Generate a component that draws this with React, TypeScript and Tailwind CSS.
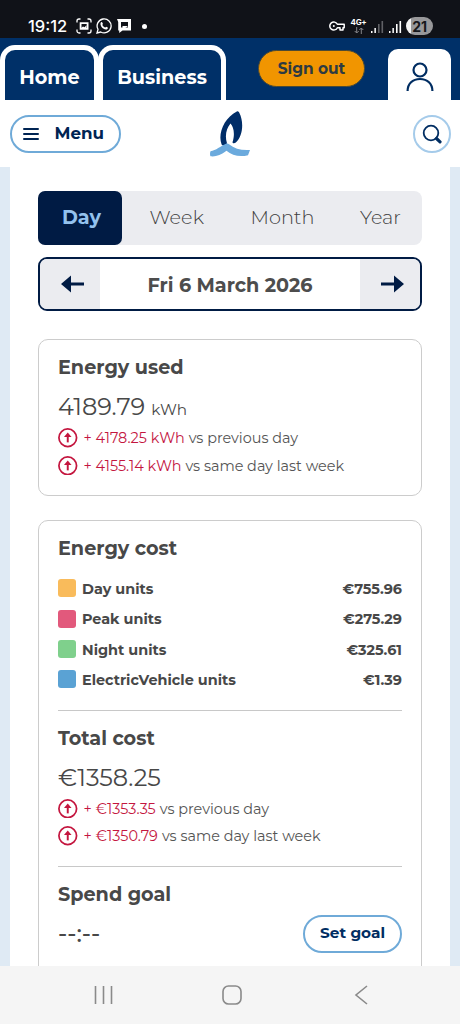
type Unit = { name: string; cost: string; swatch: string };

const units: Unit[] = [
  { name: "Day units", cost: "€755.96", swatch: "bg-[#f9bb5b]" },
  { name: "Peak units", cost: "€275.29", swatch: "bg-[#e2597c]" },
  { name: "Night units", cost: "€325.61", swatch: "bg-[#7fd08c]" },
  { name: "ElectricVehicle units", cost: "€1.39", swatch: "bg-[#5aa2d4]" },
];

const StatusBar = () => (
  <div className="flex h-[38px] items-end justify-between bg-[#101218] pr-[27px] pb-0 pl-7 font-['Inter',sans-serif] text-white">
    <div className="flex h-6 items-center">
      <span className="w-[48px] text-[16.500px] font-medium whitespace-nowrap">19:12</span>
      <svg className="block" width="16" height="16" viewBox="0 0 16 16" fill="none" stroke="white" strokeWidth="1.3">
        <path d="M1 4.5V3a2 2 0 0 1 2-2h1.5M11.5 1H13a2 2 0 0 1 2 2v1.5M15 11.5V13a2 2 0 0 1-2 2h-1.5M4.500 15H3a2 2 0 0 1-2-2v-1.500" />
        <path d="M4.600 5.200h7v5.600h-7z" strokeWidth="1.800" />
        <path d="M5 10l2-1.600 1.500.8 2-2V11H5z" fill="white" stroke="none" />
      </svg>
      <svg className="ml-1 block" width="16" height="16" viewBox="0 0 16 16" fill="none" stroke="white" strokeWidth="1.3">
        <path d="M1 15l1-3.700A7 7 0 1 1 4.700 14z" />
        <path
          d="M5 4.200c.5-.5 1-.4 1.300.2l.6 1.300c.1.500-.6.900-.6 1.300.6 1.200 1.500 2 2.700 2.600.5 0 .8-.9 1.200-.9l1.500.8c.4.300.2 1-.3 1.500-1 .9-2.500.6-4.200-.5C5.200 9.100 3.600 6 5 4.200z"
          fill="white"
          stroke="none"
        />
      </svg>
      <svg className="ml-[5px] block" width="14" height="14" viewBox="0 0 14 14">
        <path d="M0 0h14v11.500H5.500L2.200 14v-2.500H1.200V3z" fill="white" />
        <path d="M4 3h7v5.500H8.500L6 8.500H4z" fill="#101218" />
        <path d="M5.500 11V7H11z" fill="white" />
      </svg>
      <span className="ml-[11px] size-[5px] rounded-full bg-white" />
    </div>
    <div className="flex h-6 items-center">
      <svg className="block" width="16" height="10" viewBox="0 0 16 10" fill="none" stroke="white" strokeWidth="1.500">
        <path d="M8.400 3.300A4 4 0 1 0 8.400 6.700H11v2.200h3V6.700h1.200V3.300z" strokeLinejoin="round" />
        <circle cx="4.800" cy="5" r="1" fill="white" stroke="none" />
      </svg>
      <div className="ml-[6px] flex w-[15px] flex-col items-center">
        <span className="text-[8px] leading-[7px] font-bold tracking-[-0.3px]">4G+</span>
        <svg className="mt-px block" width="10" height="7" viewBox="0 0 10 7" fill="none" stroke="#85868a">
          <path d="M2.700 0v6M.7 4l2 2 2-2M7.300 7V1M5.300 3l2-2 2 2" />
        </svg>
      </div>
      <svg className="ml-[5px] block" width="13" height="13" viewBox="0 0 13 13">
        <path d="M0 11h1.500v2H0zM3.400 8h1.500v5h-1.500z" fill="white" />
        <path d="M7 4h1.600v9H7zM10.500 1h1.600v12h-1.600z" fill="#606166" />
      </svg>
      <svg className="ml-[5px] block" width="13" height="13" viewBox="0 0 13 13" fill="white">
        <path d="M0 11h1.500v2H0zM3.400 8h1.500v5h-1.500zM7 4h1.600v9H7zM10.500 1h1.600v12h-1.600z" />
      </svg>
      <span className="ml-[4px] flex h-[18px] w-[27px] items-center justify-center rounded-full bg-linear-to-r from-[#f4f4f4] from-20% to-[#98989a] to-20% text-[14px] font-bold tracking-[-0.3px] text-[#17181c]">
        21
      </span>
    </div>
  </div>
);

const TopTabs = () => (
  <div className="flex h-[62px] items-end bg-[#003068]">
    <button className="flex h-[55px] w-[99px] items-center justify-center rounded-t-[15px] border-x-[5px] border-t-[5px] border-white pt-[5px] text-[19.200px] font-bold text-white">
      Home
    </button>
    <button className="-ml-px flex h-[55px] w-[128px] items-center justify-center rounded-t-[15px] border-x-[5px] border-t-[5px] border-white pt-[5px] text-[19.200px] font-bold text-white">
      Business
    </button>
    <button className="mb-[13px] ml-8 h-[37px] w-[107px] rounded-full border border-[#4b4a35] bg-[#f19500] text-[15.400px] font-bold text-[#2d3a42]">
      Sign out
    </button>
    <button className="ml-[23px] flex h-[51px] w-[63px] items-center justify-center rounded-t-[10px] bg-white pt-1">
      <svg className="block" width="28" height="30" viewBox="0 0 28 30" fill="none" stroke="#002d62" strokeWidth="2.200">
        <circle cx="14" cy="8" r="6.500" />
        <path d="M1.600 29c0-7.300 5-12 12.400-12s12.400 4.700 12.400 12" />
      </svg>
    </button>
  </div>
);

const MainBar = () => (
  <div className="flex h-[67px] items-center bg-white pr-[9.500px] pl-[9.500px]">
    <button className="flex h-[38px] w-[111px] items-center rounded-full border-2 border-[#6faad8] pl-[11px] text-[#002453]">
      <svg className="block" width="16" height="12" viewBox="0 0 16 12" stroke="currentColor" strokeWidth="2" strokeLinecap="round">
        <path d="M1 1h14M1 6h14M1 11h14" />
      </svg>
      <span className="ml-4 text-[16.700px] font-bold">Menu</span>
    </button>
    <svg className="ml-[89.500px] block" width="40" height="46" viewBox="0 0 40 46">
      <path
        d="M11.600 33.500C7.500 23 14 7 26.800.5c1.200-.6 2 .2 2.600 1.600C34 11 33 25 25.800 31.500c-1.200 1-3 1.200-3.300-.2C25 24 24 16 20.500 12.500 16.500 17 14.500 25 17 32.300c-1 2.300-4.500 2.900-5.400 1.200z"
        fill="#002d68"
      />
      <path
        d="M.5 40.200C6 39.500 10.500 35 16 32.700c1.300-.5 2-.3 3 .5 5.500 4.600 12.300 6.400 21 5.800l-2 5.200C29 46.500 22 44 16.500 39.700 11 44 5.500 46 .5 45.300-.3 44 0 41.500.5 40.200z"
        fill="#6baadd"
      />
    </svg>
    <button className="ml-auto flex size-[38px] items-center justify-center rounded-full border-2 border-[#a5cbea]">
      <svg className="block" width="20" height="20" viewBox="0 0 20 20" fill="none" stroke="#002d62">
        <circle cx="9" cy="9" r="7.300" strokeWidth="1.800" />
        <path d="M14.500 14.500l3.500 3.300" strokeWidth="3.200" strokeLinecap="round" />
      </svg>
    </button>
  </div>
);

const PeriodTabs = () => (
  <div className="flex h-[54px] items-center rounded-[8px] bg-[#ebecf0] pb-px text-[19.300px] font-light text-[#3f3f3f]">
    <div className="-mb-px flex h-[54px] w-[84px] items-center justify-center rounded-[7px] bg-[#001b44] pb-px pl-[3px] text-[19.200px] font-bold text-[#93c2ee]">
      Day
    </div>
    <span className="ml-[27.500px] w-[101px]">Week</span>
    <span className="w-[109.500px]">Month</span>
    <span>Year</span>
  </div>
);

const Arrow = ({ className = "" }: { className?: string }) => (
  <svg className={className} width="23" height="18" viewBox="0 0 23 18" fill="#001b44">
    <path d="M0 9l10-8.500V7.500h13v3H10v7z" />
  </svg>
);

const DatePicker = () => (
  <div className="mt-3 flex h-[54px] overflow-hidden rounded-[9px] border-2 border-[#001b44]">
    <div className="flex w-[60px] items-center justify-center bg-[#ebecf0] pl-1">
      <Arrow className="block" />
    </div>
    <div className="flex flex-1 items-center justify-center pt-0.5 text-[19.200px] font-bold text-[#4d4d4d]">
      Fri 6 March 2026
    </div>
    <div className="flex w-[60px] items-center justify-center bg-[#ebecf0] pl-1">
      <Arrow className="block rotate-180" />
    </div>
  </div>
);

const Heading = ({ children }: { children: string }) => (
  <h2 className="pb-0.5 text-[19.200px] leading-[22px] font-bold text-[#484848]">{children}</h2>
);

const Change = ({ amount, since }: { amount: string; since: string }) => (
  <div className="flex h-[27.500px] items-center text-[14.400px] whitespace-nowrap text-[#555555]">
    <svg className="mr-[6px] block" width="19.500" height="19.500" viewBox="0 0 19 19" fill="none" stroke="#c4163f">
      <circle cx="9.500" cy="9.500" r="8.600" strokeWidth="1.700" />
      <path d="M9.500 14V8" strokeWidth="1.900" />
      <path d="M9.500 4.500l3.700 4.300H5.800z" fill="#c4163f" stroke="none" />
    </svg>
    <span className="mr-1 pt-[3px] text-[#c4163f]">{amount}</span>
    <span className="pt-[3px]">{since}</span>
  </div>
);

const App = () => {
  return (
    <div className="flex h-[1024px] w-[460px] flex-col overflow-hidden bg-[#dfeaf4] font-['Montserrat','Inter',sans-serif]">
      <StatusBar />
      <TopTabs />
      <MainBar />

      <main className="mx-[10px] h-[799px] overflow-hidden bg-white px-[28px] pt-[24px]">
        <PeriodTabs />
        <DatePicker />

        <section className="mt-[28px] h-[157px] rounded-[10px] border border-[#cccccc] px-[19px] pt-4">
          <Heading>Energy used</Heading>
          <div className="mt-[10px] flex h-[34px] items-baseline text-[#484848]">
            <span className="text-[24px] leading-[34px]">4189.79</span>
            <span className="ml-1.5 text-[15.200px]">kWh</span>
          </div>
          <Change amount="+ 4178.25 kWh" since="vs previous day" />
          <Change amount="+ 4155.14 kWh" since="vs same day last week" />
        </section>

        <section className="mt-[24px] h-[500px] rounded-t-[10px] border border-[#cccccc] px-[19px] pt-4">
          <Heading>Energy cost</Heading>
          <div className="mt-[12px] h-[136.500px]">
            {units.map((unit) => (
              <div key={unit.name} className="flex h-[30.400px] items-center text-[14.400px] font-bold text-[#484848]">
                <span className={`mr-[6px] size-[18px] rounded-[3px] ${unit.swatch}`} />
                <span className="pt-[3px]">{unit.name}</span>
                <span className="ml-auto pt-[3px]">{unit.cost}</span>
              </div>
            ))}
          </div>

          <hr className="mt-[0.500px] border-[#c8c8c8]" />

          <div className="mt-[16px]">
            <Heading>Total cost</Heading>
          </div>
          <div className="mt-[10px] h-[33.500px] text-[24px] leading-[34px] text-[#484848]">€1358.25</div>
          <Change amount="+ €1353.35" since="vs previous day" />
          <Change amount="+ €1350.79" since="vs same day last week" />

          <hr className="mt-[16px] border-[#c8c8c8]" />

          <div className="mt-[16px]">
            <Heading>Spend goal</Heading>
          </div>
          <div className="mt-[8px] flex h-[38px] items-center justify-between text-[#484848]">
            <span className="text-[24px] font-medium">--:--</span>
            <button className="h-[38px] w-[99px] rounded-full border-2 border-[#6faad8] text-[15.300px] font-bold text-[#002d62]">
              Set goal
            </button>
          </div>
        </section>
      </main>

      <nav className="flex h-[58px] items-center bg-[#f5f5f5]">
        <svg className="ml-[94px] block" width="19" height="19" viewBox="0 0 19 19" stroke="#8a8a8a" strokeWidth="1.600">
          <path d="M1.500 0v18M9.500 0v18M17.500 0v18" />
        </svg>
        <svg className="ml-[109px] block" width="20" height="20" viewBox="0 0 20 20" fill="none" stroke="#8a8a8a" strokeWidth="1.600">
          <rect x="1" y="1" width="18" height="18" rx="5.500" />
        </svg>
        <svg className="ml-[112px] block" width="14" height="20" viewBox="0 0 14 20" fill="none" stroke="#8a8a8a" strokeWidth="1.600">
          <path d="M13 1L2 10l11 9" />
        </svg>
      </nav>
    </div>
  );
};

export default App;
